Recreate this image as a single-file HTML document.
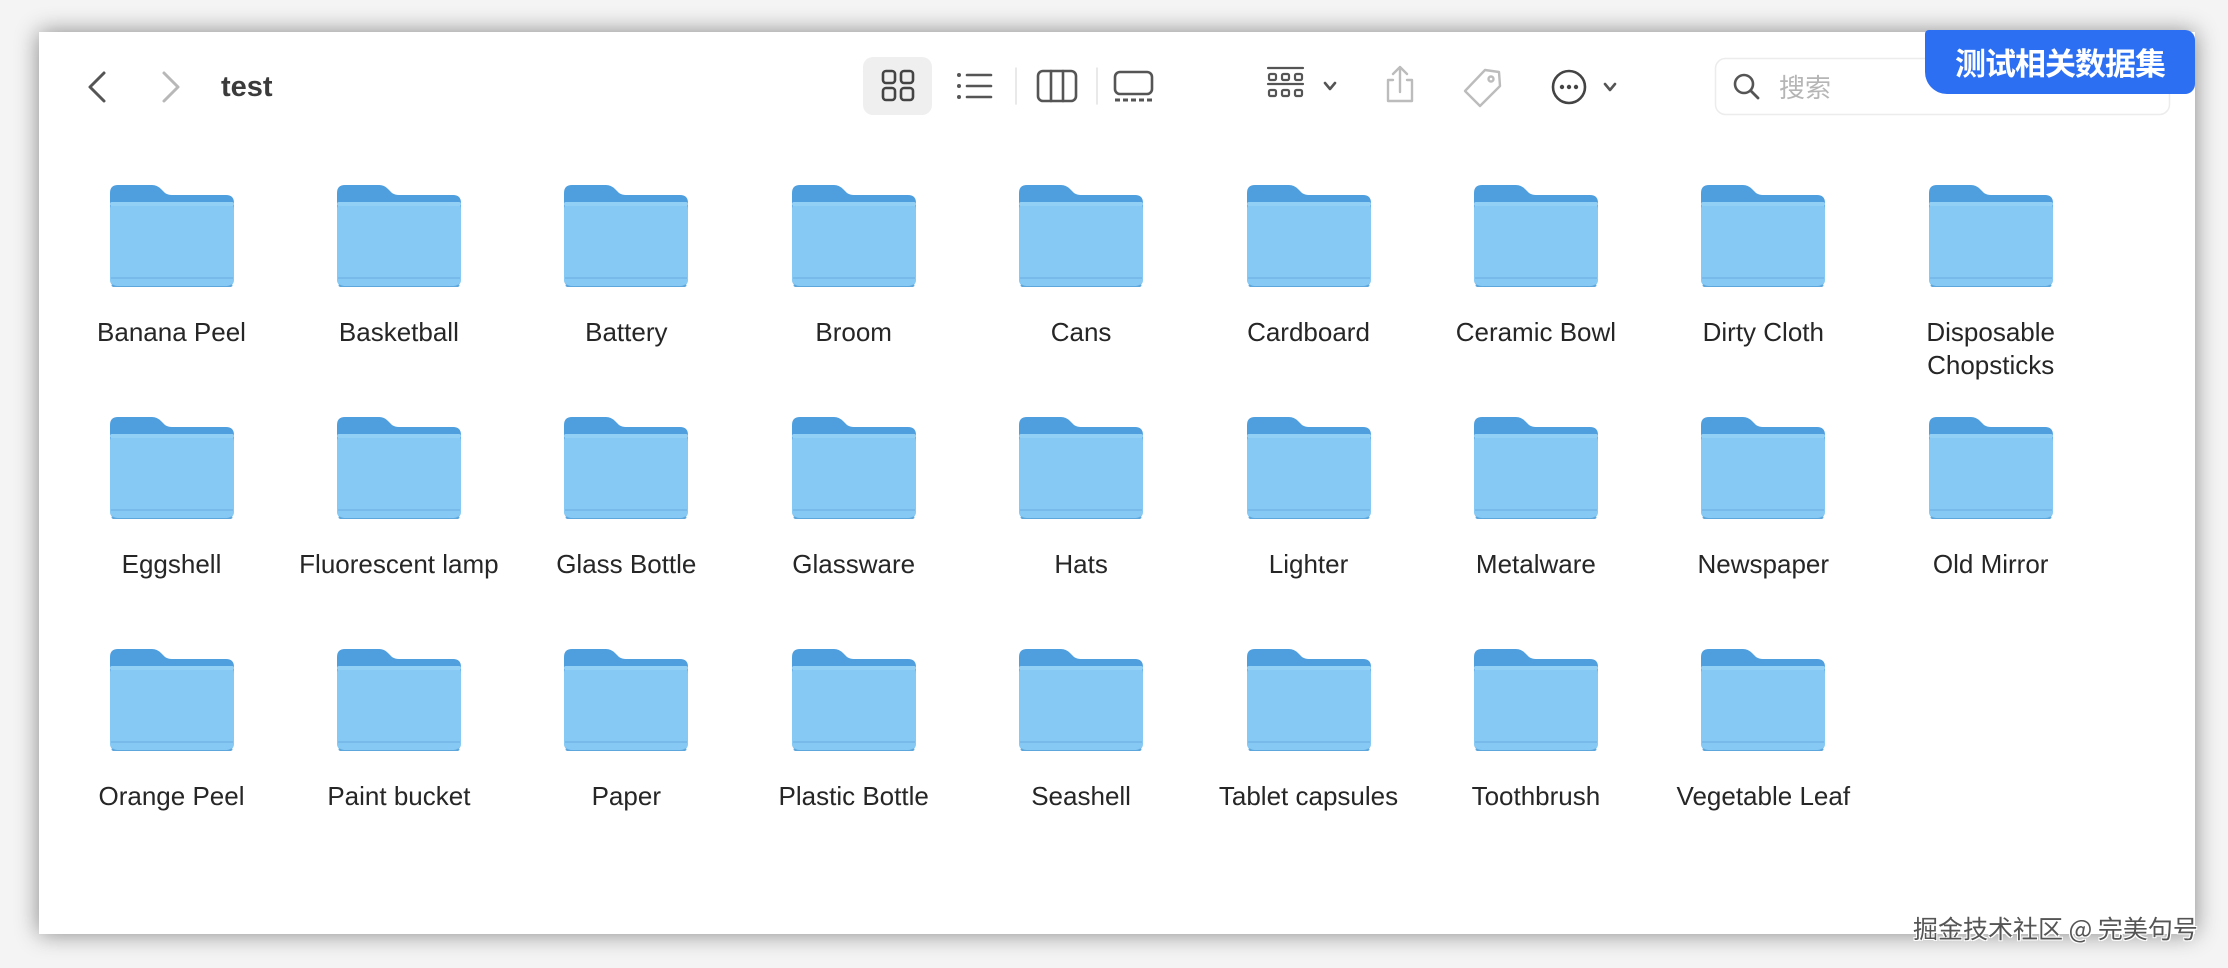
<!DOCTYPE html>
<html><head><meta charset="utf-8"><style>
html,body{margin:0;padding:0;}
body{width:2228px;height:968px;background:#f4f4f4;position:relative;overflow:hidden;font-family:"Liberation Sans","Noto Sans CJK SC",sans-serif;}
.win{position:absolute;left:39px;top:32px;width:2156px;height:902px;background:#fff;box-shadow:0 0 22px rgba(0,0,0,0.45);}
.abs{position:absolute;}
.item{position:absolute;width:227px;text-align:center;}
.item svg{display:block;margin:0 auto;}
.item .lbl{font-size:26px;color:#262626;line-height:33px;margin-top:29px;white-space:nowrap;margin-left:-20px;margin-right:-20px;}
.badge{position:absolute;left:1925px;top:30px;width:270px;height:64px;background:#2d6ff2;border-radius:4px 10px 10px 22px;color:#fff;font-weight:bold;font-size:31px;line-height:64px;text-align:center;font-family:"Noto Sans CJK SC",sans-serif;letter-spacing:-1px;}
.wm{position:absolute;left:1913px;top:910px;font-size:25px;color:#555;font-family:"Noto Sans CJK SC",sans-serif;text-shadow:1px 1px 0 #fff,-1px -1px 0 #fff,1px -1px 0 #fff,-1px 1px 0 #fff;}
</style></head><body>
<div class="win"></div>
<svg class="abs" style="left:0;top:0" width="2228" height="968" fill="none" stroke-linecap="round" stroke-linejoin="round">
 <path d="M104 73 L90 87 L104 101" stroke="#555" stroke-width="3"/>
 <path d="M164 73 L178 87 L164 101" stroke="#b8b8b8" stroke-width="3"/>
 <rect x="863" y="57" width="69" height="58" rx="10" fill="#efefef" stroke="none"/>
 <g stroke="#444" stroke-width="2.6">
  <rect x="883" y="71" width="12" height="12" rx="3"/><rect x="901" y="71" width="12" height="12" rx="3"/>
  <rect x="883" y="88" width="12" height="12" rx="3"/><rect x="901" y="88" width="12" height="12" rx="3"/>
 </g>
 <g stroke="#555" stroke-width="2.6">
  <path d="M967 75 H991 M967 86 H991 M967 97 H991"/>
 </g>
 <g fill="#555" stroke="none"><circle cx="959" cy="75" r="2"/><circle cx="959" cy="86" r="2"/><circle cx="959" cy="97" r="2"/></g>
 <path d="M1016 68 V104 M1097 68 V104" stroke="#e2e2e2" stroke-width="1.5"/>
 <rect x="1038" y="71" width="38" height="30" rx="5" stroke="#555" stroke-width="2.6"/>
 <path d="M1051 71 V101 M1063 71 V101" stroke="#555" stroke-width="2.6"/>
 <rect x="1115" y="72" width="37" height="22" rx="5" stroke="#555" stroke-width="2.6"/>
 <path d="M1115 100 H1152" stroke="#555" stroke-width="3" stroke-dasharray="5 3" stroke-linecap="butt"/>
 <g stroke="#555" stroke-width="2.2">
  <path d="M1268 68 H1303 M1268 84 H1303"/>
  <rect x="1269" y="74" width="7" height="6" rx="1.5"/><rect x="1282" y="74" width="7" height="6" rx="1.5"/><rect x="1295" y="74" width="7" height="6" rx="1.5"/>
  <rect x="1269" y="90" width="7" height="6" rx="1.5"/><rect x="1282" y="90" width="7" height="6" rx="1.5"/><rect x="1295" y="90" width="7" height="6" rx="1.5"/>
  <path d="M1325 83 L1330 89 L1335 83" stroke-width="2.6"/>
 </g>
 <g stroke="#bcbcbc" stroke-width="2.4">
  <path d="M1393 80 H1388 V101 H1412 V80 H1407 M1400 92 V67 M1393 74 L1400 67 L1407 74"/>
  <path d="M1485 70 L1499 72 L1500 86 L1480 106 L1465 91 Z"/>
  <circle cx="1491" cy="79" r="2.5"/>
 </g>
 <circle cx="1569" cy="87" r="16" stroke="#444" stroke-width="2.6"/>
 <g fill="#444" stroke="none"><circle cx="1562" cy="87" r="2.2"/><circle cx="1569" cy="87" r="2.2"/><circle cx="1576" cy="87" r="2.2"/></g>
 <path d="M1605 84 L1610 90 L1615 84" stroke="#555" stroke-width="2.6"/>
 <rect x="1715.5" y="58.5" width="454" height="56" rx="10" stroke="#ececec" stroke-width="1.5" fill="#fff"/>
 <circle cx="1744" cy="84" r="9" stroke="#555" stroke-width="2.6"/>
 <path d="M1751 91 L1758 98" stroke="#555" stroke-width="2.8"/>
</svg>
<div class="abs" style="left:221px;top:71px;font-size:29px;font-weight:bold;color:#3b3b3b;">test</div>
<div class="abs" style="left:1779px;top:72px;font-size:26px;color:#b5b5b5;font-family:'Noto Sans CJK SC',sans-serif;line-height:30px;">搜索</div>
<div class="badge">测试相关数据集</div>

<div id="grid"></div>
<script>
const names=["Banana Peel","Basketball","Battery","Broom","Cans","Cardboard","Ceramic Bowl","Dirty Cloth","Disposable Chopsticks","Eggshell","Fluorescent lamp","Glass Bottle","Glassware","Hats","Lighter","Metalware","Newspaper","Old Mirror","Orange Peel","Paint bucket","Paper","Plastic Bottle","Seashell","Tablet capsules","Toothbrush","Vegetable Leaf"];
const folder='<svg width="124" height="102" viewBox="0 0 124 102"><path d="M0 8 Q0 0 8 0 H42 Q47 0 51 4 L55 8 Q58 10 62 10 H116 Q124 10 124 18 V60 H0 Z" fill="#4f9fdf"/><rect x="0" y="17" width="124" height="85" rx="7" fill="#86c9f4"/><rect x="0" y="17" width="124" height="4" rx="2" fill="#93d0f6"/><path d="M1 93 H123" stroke="#74b6e6" stroke-width="1.5"/><path d="M2 100 Q4 102 8 102 H116 Q120 102 122 100" stroke="#5ea7dc" stroke-width="2" fill="none"/></svg>';
let h='';
names.forEach((n,i)=>{const c=i%9,r=Math.floor(i/9);
h+='<div class="item" style="left:'+(58+c*227.4)+'px;top:'+(185+r*232)+'px">'+folder+'<div class="lbl">'+(n=="Disposable Chopsticks"?"Disposable<br>Chopsticks":n)+'</div></div>';});
document.getElementById('grid').innerHTML=h;
</script>
<div class="wm">掘金技术社区 @ 完美句号</div>
</body></html>
